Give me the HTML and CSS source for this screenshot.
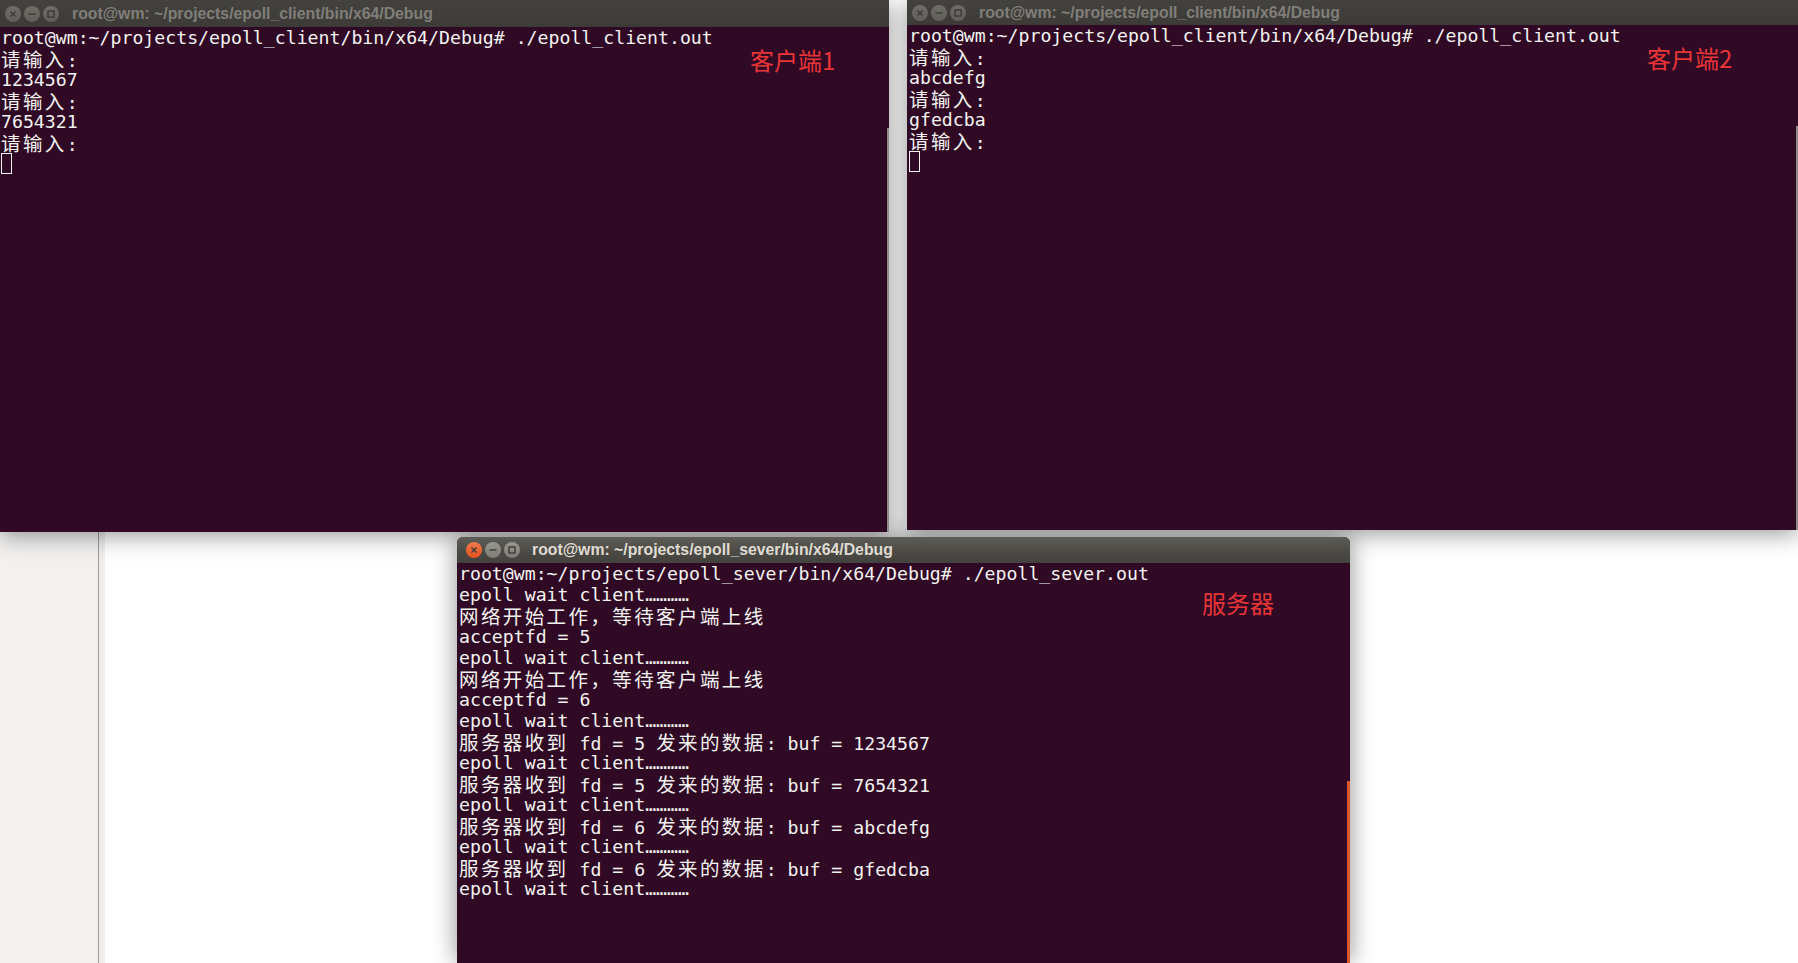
FILE: index.html
```html
<!DOCTYPE html>
<html lang="zh-CN">
  <head>
    <meta charset="UTF-8" />
    <meta name="viewport" content="width=device-width, initial-scale=1.0" />
    <title>epoll</title>
    <link rel="stylesheet" href="styles.css">
  </head>
  <body>
    <main class="desktop">
      <div class="top-row">
        <!-- 客户端1 -->
        <section class="term term--left">
          <header class="term__title">
            <span class="btns">
              <span class="btn"><svg viewBox="0 0 16 16"><path d="M5.5 5.5l5 5M10.5 5.5l-5 5" /></svg></span>
              <span class="btn"><svg viewBox="0 0 16 16"><path d="M4.5 8h7" /></svg></span>
              <span class="btn"><svg viewBox="0 0 16 16"><rect x="5" y="5" width="6" height="6" /></svg></span>
            </span>
            <span class="term__name">root@wm: ~/projects/epoll_client/bin/x64/Debug</span>
          </header>
          <div class="term__body">
            <div class="ln">root@wm:~/projects/epoll_client/bin/x64/Debug# ./epoll_client.out</div>
            <div class="ln"><span class="w">请输入</span>:</div>
            <div class="ln">1234567</div>
            <div class="ln"><span class="w">请输入</span>:</div>
            <div class="ln">7654321</div>
            <div class="ln"><span class="w">请输入</span>:</div>
            <div class="ln"><span class="cursor"></span></div>
            <span class="note note--c1">客户端1</span>
            <span class="scroll"></span>
          </div>
        </section>

        <!-- 客户端2 -->
        <section class="term term--right">
          <header class="term__title">
            <span class="btns">
              <span class="btn"><svg viewBox="0 0 16 16"><path d="M5.5 5.5l5 5M10.5 5.5l-5 5" /></svg></span>
              <span class="btn"><svg viewBox="0 0 16 16"><path d="M4.5 8h7" /></svg></span>
              <span class="btn"><svg viewBox="0 0 16 16"><rect x="5" y="5" width="6" height="6" /></svg></span>
            </span>
            <span class="term__name">root@wm: ~/projects/epoll_client/bin/x64/Debug</span>
          </header>
          <div class="term__body">
            <div class="ln">root@wm:~/projects/epoll_client/bin/x64/Debug# ./epoll_client.out</div>
            <div class="ln"><span class="w">请输入</span>:</div>
            <div class="ln">abcdefg</div>
            <div class="ln"><span class="w">请输入</span>:</div>
            <div class="ln">gfedcba</div>
            <div class="ln"><span class="w">请输入</span>:</div>
            <div class="ln"><span class="cursor"></span></div>
            <span class="note note--c2">客户端2</span>
            <span class="scroll"></span>
          </div>
        </section>
      </div>

      <div class="bottom-row">
        <!-- 服务器 -->
        <section class="term term--server">
          <header class="term__title">
            <span class="btns">
              <span class="btn btn--close"><svg viewBox="0 0 16 16"><path d="M5.5 5.5l5 5M10.5 5.5l-5 5" /></svg></span>
              <span class="btn"><svg viewBox="0 0 16 16"><path d="M4.5 8h7" /></svg></span>
              <span class="btn"><svg viewBox="0 0 16 16"><rect x="5" y="5" width="6" height="6" /></svg></span>
            </span>
            <span class="term__name">root@wm: ~/projects/epoll_sever/bin/x64/Debug</span>
          </header>
          <div class="term__body">
            <div class="ln">root@wm:~/projects/epoll_sever/bin/x64/Debug# ./epoll_sever.out</div>
            <div class="ln">epoll wait client…………</div>
            <div class="ln"><span class="w">网络开始工作，等待客户端上线</span></div>
            <div class="ln">acceptfd = 5</div>
            <div class="ln">epoll wait client…………</div>
            <div class="ln"><span class="w">网络开始工作，等待客户端上线</span></div>
            <div class="ln">acceptfd = 6</div>
            <div class="ln">epoll wait client…………</div>
            <div class="ln"><span class="w">服务器收到</span> fd = 5 <span class="w">发来的数据</span>: buf = 1234567</div>
            <div class="ln">epoll wait client…………</div>
            <div class="ln"><span class="w">服务器收到</span> fd = 5 <span class="w">发来的数据</span>: buf = 7654321</div>
            <div class="ln">epoll wait client…………</div>
            <div class="ln"><span class="w">服务器收到</span> fd = 6 <span class="w">发来的数据</span>: buf = abcdefg</div>
            <div class="ln">epoll wait client…………</div>
            <div class="ln"><span class="w">服务器收到</span> fd = 6 <span class="w">发来的数据</span>: buf = gfedcba</div>
            <div class="ln">epoll wait client…………</div>
            <span class="note note--srv">服务器</span>
            <span class="scroll scroll--active"></span>
          </div>
        </section>
      </div>
    </main>
  </body>
</html>
```

FILE: styles.css
```css
* {
  margin: 0;
  padding: 0;
  box-sizing: border-box;
}

body {
  width: 1798px;
  height: 963px;
  overflow: hidden;
  background-color: #fff;
}

/* app behind the terminals: grey sidebar on the left, white page */
.desktop {
  width: 1798px;
  height: 963px;
  background: linear-gradient(
    to right,
    #f2f1f0 0,
    #f2f1f0 98px,
    #9c9b99 98px,
    #9c9b99 99px,
    #efeeed 99px,
    #efeeed 105px,
    #fff 105px
  );
}

.top-row {
  display: flex;
  align-items: flex-start;
  gap: 18px;
  height: 532px;
}

.bottom-row {
  padding: 5px 0 0 457px;
}

/* terminal window */
.term {
  display: flex;
  flex-direction: column;
  background-color: #300a24;
  box-shadow: 0 4px 22px rgba(0, 0, 0, 0.4);
}

.term--left {
  width: 889px;
  height: 532px;
}

.term--right {
  flex: 1;
  height: 530px;
}

.term--server {
  width: 893px;
  height: 426px;
  border-radius: 6px 6px 0 0;
  box-shadow: 0 0 24px rgba(0, 0, 0, 0.45);
}

.term__title {
  display: flex;
  align-items: center;
  flex-shrink: 0;
  height: 27px;
  padding-left: 5px;
  background: linear-gradient(#43423e, #3c3b37);
  color: #807e78;
  font-family: 'Liberation Sans', 'Noto Sans', sans-serif;
  font-weight: 700;
  font-size: 15.8px;
}

.term--right .term__title {
  height: 25px;
}

.term--server .term__title {
  height: 26px;
  padding-left: 9px;
  border-radius: 6px 6px 0 0;
  background: linear-gradient(#5e5c56, #4a4944 60%, #43423e);
  color: #dfdbd2;
}

.btns {
  display: flex;
  gap: 3px;
  margin-right: 13px;
}

.term--server .btns {
  margin-right: 12px;
}

.btn {
  display: flex;
  width: 16px;
  height: 16px;
  border-radius: 50%;
  background: linear-gradient(#6e6d68, #5e5d58);
}

.term--server .btn {
  background: linear-gradient(#9a9892, #7b7a75);
}

.term--server .btn--close {
  background: linear-gradient(#f47a4c, #e2521d);
}

.btn svg {
  width: 16px;
  height: 16px;
  fill: none;
  stroke: #3c3b37;
  stroke-width: 1.4;
}

.term__body {
  position: relative;
  flex: 1;
  padding-left: 1px;
  color: #f3f3f1;
  font-family: 'DejaVu Sans Mono', 'Noto Sans CJK SC', monospace;
  font-size: 18.2px;
}

.term--right .term__body,
.term--server .term__body {
  padding-left: 2px;
}

.ln {
  height: 21px;
  line-height: 21px;
  white-space: pre;
}

/* CJK glyphs take two cells in the terminal */
.w {
  font-family: 'Noto Sans CJK SC', sans-serif;
  font-size: 19.5px;
  letter-spacing: 2.4px;
}

.cursor {
  display: inline-block;
  width: 11px;
  height: 21px;
  vertical-align: top;
  border: 1px solid #f3f3f1;
}

/* red annotation drawn over the screenshot */
.note {
  position: absolute;
  color: #ea3538;
  font-family: 'Noto Sans CJK SC', sans-serif;
  font-size: 24px;
  line-height: 1;
}

.note--c1 {
  left: 750px;
  top: 21px;
}

.note--c2 {
  left: 740px;
  top: 21px;
}

.note--srv {
  left: 745px;
  top: 28px;
}

/* overlay scrollbars */
.scroll {
  position: absolute;
  right: 0;
  bottom: 0;
  top: 101px;
  width: 2px;
  background-color: #8d8b88;
}

.scroll--active {
  top: 218px;
  width: 3px;
  background-color: #d9582b;
}
```
